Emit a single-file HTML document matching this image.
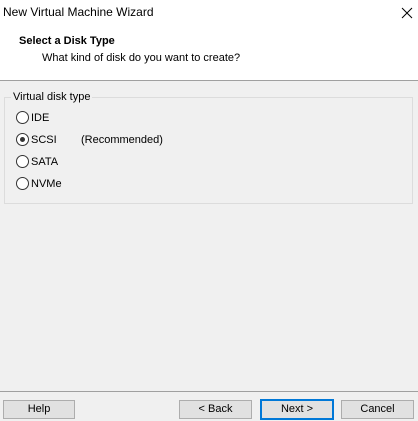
<!DOCTYPE html>
<html><head><style>
body{margin:0;width:418px;height:421px;background:#f0f0f0;font-family:"Liberation Sans",sans-serif;font-size:11px;color:#000;position:relative;overflow:hidden}
.a{position:absolute}
.btn{position:absolute;top:400px;height:17px;border:1px solid #adadad;background:#e1e1e1;text-align:center;line-height:17px;font-size:11px}
.r{position:absolute;width:11px;height:11px;border:1px solid #333;border-radius:50%;background:#fff;left:16px}
.t{position:absolute;left:31px;font-size:11px}
</style></head><body>
<div class="a" style="left:0;top:0;width:418px;height:80px;background:#fff;border-bottom:1px solid #a0a0a0"></div>
<div class="a" style="left:3px;top:5px;font-size:12px">New Virtual Machine Wizard</div>
<svg class="a" style="left:401px;top:7px" width="12" height="12"><path d="M1 1L11 11M11 1L1 11" stroke="#000" stroke-width="1"/></svg>
<div class="a" style="left:19px;top:35px;font-weight:bold">Select a Disk Type</div>
<div class="a" style="left:42px;top:52px">What kind of disk do you want to create?</div>
<div class="a" style="left:4px;top:97px;width:407px;height:105px;border:1px solid #dcdcdc"></div>
<div class="a" style="left:11px;top:91px;background:#f0f0f0;padding:0 2px">Virtual disk type</div>
<div class="r" style="top:111px"></div><div class="t" style="top:112px">IDE</div>
<div class="r" style="top:133px"><div style="position:absolute;left:3px;top:3px;width:5px;height:5px;border-radius:50%;background:#333"></div></div><div class="t" style="top:134px">SCSI</div>
<div class="a" style="left:81px;top:134px">(Recommended)</div>
<div class="r" style="top:155px"></div><div class="t" style="top:156px">SATA</div>
<div class="r" style="top:177px"></div><div class="t" style="top:178px">NVMe</div>
<div class="a" style="left:0;top:391px;width:418px;height:1px;background:#a0a0a0"></div>
<div class="btn" style="left:3px;width:70px">Help</div>
<div class="btn" style="left:179px;width:71px">&lt; Back</div>
<div class="btn" style="left:260px;width:70px;border:2px solid #0078d7;top:399px;height:17px">Next &gt;</div>
<div class="btn" style="left:341px;width:71px">Cancel</div>
</body></html>
